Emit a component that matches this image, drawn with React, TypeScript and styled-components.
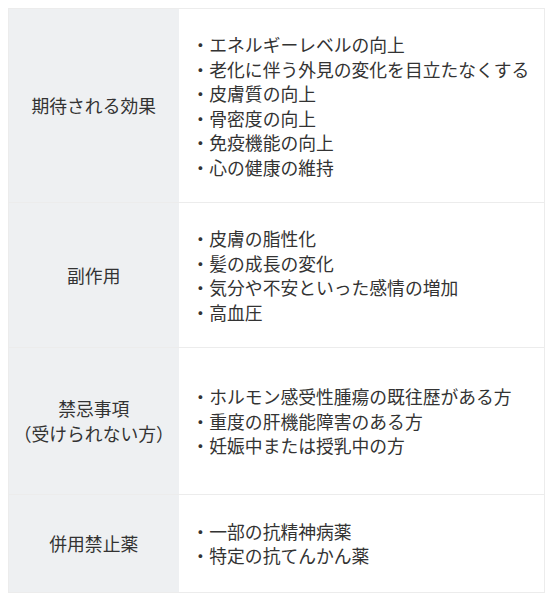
import React from "react";
import styled, { createGlobalStyle } from "styled-components";

const Global = createGlobalStyle`
  body {
    margin: 8px;
    background: #ffffff;
    font-family: "Noto Sans CJK JP", "Noto Sans", sans-serif;
    color: #333333;
  }
`;

const Table = styled.table`
  width: 100%;
  border-collapse: collapse;
  table-layout: fixed;
  border: 1px solid #ececec;
  font-size: 17.8px;
  line-height: 24.5px;
`;

const Row = styled.tr`
  border-bottom: 1px solid #ececec;
`;

const HeadCol = styled.col`
  width: 170px;
`;

const Head = styled.th<{ $pad: number }>`
  padding: ${(p) => p.$pad}px 0;
  background: #eef0f2;
  font-weight: 400;
  text-align: center;
  vertical-align: middle;
  white-space: nowrap;
  color: #333333;
`;

const Cell = styled.td<{ $pad: number }>`
  padding: ${(p) => p.$pad}px 8px ${(p) => p.$pad}px 13px;
  vertical-align: middle;
  background: #ffffff;
`;

const Item = styled.div`
  white-space: nowrap;
`;

const rows: { head: React.ReactNode; items: string[]; pad: number }[] = [
  {
    head: "期待される効果",
    pad: 23,
    items: [
      "エネルギーレベルの向上",
      "老化に伴う外見の変化を目立たなくする",
      "皮膚質の向上",
      "骨密度の向上",
      "免疫機能の向上",
      "心の健康の維持",
    ],
  },
  {
    head: "副作用",
    pad: 23,
    items: ["皮膚の脂性化", "髪の成長の変化", "気分や不安といった感情の増加", "高血圧"],
  },
  {
    head: (
      <>
        禁忌事項
        <br />
        （受けられない方）
      </>
    ),
    pad: 36,
    items: ["ホルモン感受性腫瘍の既往歴がある方", "重度の肝機能障害のある方", "妊娠中または授乳中の方"],
  },
  {
    head: "併用禁止薬",
    pad: 24,
    items: ["一部の抗精神病薬", "特定の抗てんかん薬"],
  },
];

export default function App() {
  return (
    <>
      <Global />
      <Table>
        <colgroup>
          <HeadCol />
          <col />
        </colgroup>
        <tbody>
          {rows.map((r, i) => (
            <Row key={i}>
              <Head $pad={r.pad}>{r.head}</Head>
              <Cell $pad={r.pad}>
                {r.items.map((it) => (
                  <Item key={it}>・{it}</Item>
                ))}
              </Cell>
            </Row>
          ))}
        </tbody>
      </Table>
    </>
  );
}
